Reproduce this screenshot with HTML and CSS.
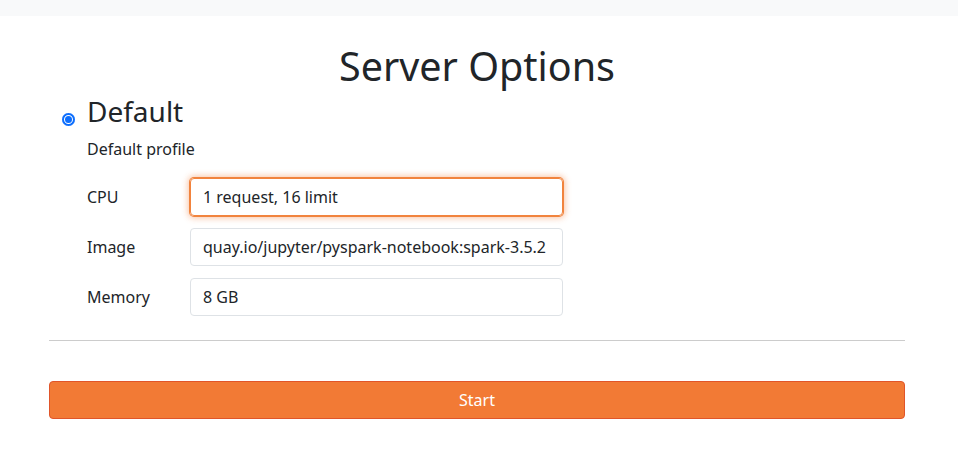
FILE: index.html
```html
<!DOCTYPE html>
<html>
<head>
<meta charset="utf-8">
<link rel="stylesheet" href="styles.css">
</head>
<body>
<div class="topbar"></div>
<main class="container">
  <h1 class="title">Server Options</h1>
  <div class="profile">
    <div class="profile-head">
      <span class="radio"></span>
      <h3 class="profile-name">Default</h3>
    </div>
    <p class="profile-desc">Default profile</p>
    <div class="fields">
      <div class="field">
        <label class="field-label">CPU</label>
        <div class="input focused">1 request, 16 limit</div>
      </div>
      <div class="field">
        <label class="field-label">Image</label>
        <div class="input">quay.io/jupyter/pyspark-notebook:spark-3.5.2</div>
      </div>
      <div class="field">
        <label class="field-label">Memory</label>
        <div class="input">8 GB</div>
      </div>
    </div>
  </div>
  <hr class="divider">
  <button class="start">Start</button>
</main>
</body>
</html>
```
FILE: styles.css
```css
* { box-sizing: border-box; }
html, body { margin: 0; padding: 0; background: #fff; }
body {
  font-family: "Noto Sans", "Open Sans", sans-serif;
  color: #212529;
  font-size: 16px;
}
.topbar { height: 16px; background: #f8f9fa; }
.container { margin: 0 53px 0 49px; }
.title {
  margin: 26px 0 0;
  font-size: 39.5px;
  font-weight: 400;
  line-height: 48px;
  text-align: center;
}
.profile { padding-left: 38px; }
.profile-head { display: flex; align-items: center; margin-top: 3px; position: relative; }
.radio {
  position: absolute;
  left: -25px;
  top: 20px;
  width: 13px; height: 13px;
  border-radius: 50%;
  background: #0d6efd;
  box-shadow: inset 0 0 0 2px #0d6efd, inset 0 0 0 3px #fff;
}
.profile-name { margin: 0; font-size: 28px; font-weight: 400; line-height: 36px; }
.profile-desc { margin: 8px 0 0; line-height: 24px; }
.fields { margin-top: 17px; display: flex; flex-direction: column; gap: 12px; }
.field { display: flex; align-items: center; }
.field-label { width: 103px; }
.input {
  width: 373px;
  height: 38px;
  border: 1px solid #dee2e6;
  border-radius: 4px;
  padding: 6px 12px;
  line-height: 24px;
  white-space: nowrap;
}
.input.focused {
  border-color: #f2833d;
  box-shadow: 0 0 0 1px #f0843e, 0 0 6px 2px rgba(242, 122, 53, 0.45);
}
.divider { margin: 24px 0 0; border: 0; border-top: 1px solid #ccc; }
.start {
  display: block;
  width: 100%;
  margin-top: 40px;
  height: 38px;
  background: #f27a35;
  border: 1px solid #e0552a;
  border-radius: 4px;
  color: #fff;
  font-family: inherit;
  font-size: 16px;
}
```
